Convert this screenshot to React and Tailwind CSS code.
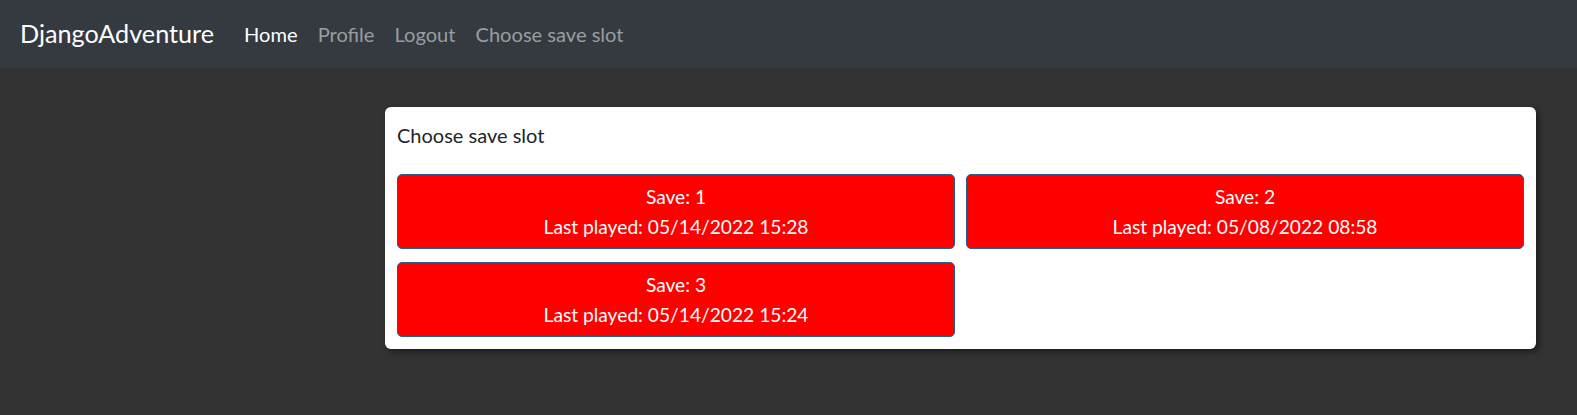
export default function App() {
  const saves = [
    { n: 1, t: "05/14/2022 15:28" },
    { n: 2, t: "05/08/2022 08:58" },
    { n: 3, t: "05/14/2022 15:24" },
  ];
  return (
    <div className="min-h-[415px] bg-[#333333]" style={{ fontFamily: '"Lato", "Noto Sans", sans-serif' }}>
      <nav className="h-[68px] bg-[#343a40] flex items-center pl-[20px]">
        <span className="text-[25.2px] text-white mr-[30px] leading-none">DjangoAdventure</span>
        <div className="flex items-center gap-[20px] text-[20.1px] leading-none">
          <span className="text-white">Home</span>
          <span className="text-[#9b9da0]">Profile</span>
          <span className="text-[#9b9da0]">Logout</span>
          <span className="text-[#9b9da0]">Choose save slot</span>
        </div>
      </nav>
      <div className="flex pl-[385px] pt-[39px]">
        <div className="w-[1151px] bg-white rounded-[6px] shadow-[3px_3px_6px_rgba(0,0,0,0.45)] px-[12px] pt-[14px] pb-[12px]">
          <div className="text-[20px] leading-[29px] text-[#212529] mb-[24px]">Choose save slot</div>
          <div className="grid grid-cols-2 gap-x-[11px] gap-y-[13px]">
            {saves.map((s) => (
              <div
                key={s.n}
                className="h-[75px] bg-[#ff0000] border border-[#1f6391] rounded-[5px] flex flex-col items-center justify-center text-white text-[19.2px] leading-[30px]"
              >
                <span>Save: {s.n}</span>
                <span>Last played: {s.t}</span>
              </div>
            ))}
          </div>
        </div>
      </div>
    </div>
  );
}
